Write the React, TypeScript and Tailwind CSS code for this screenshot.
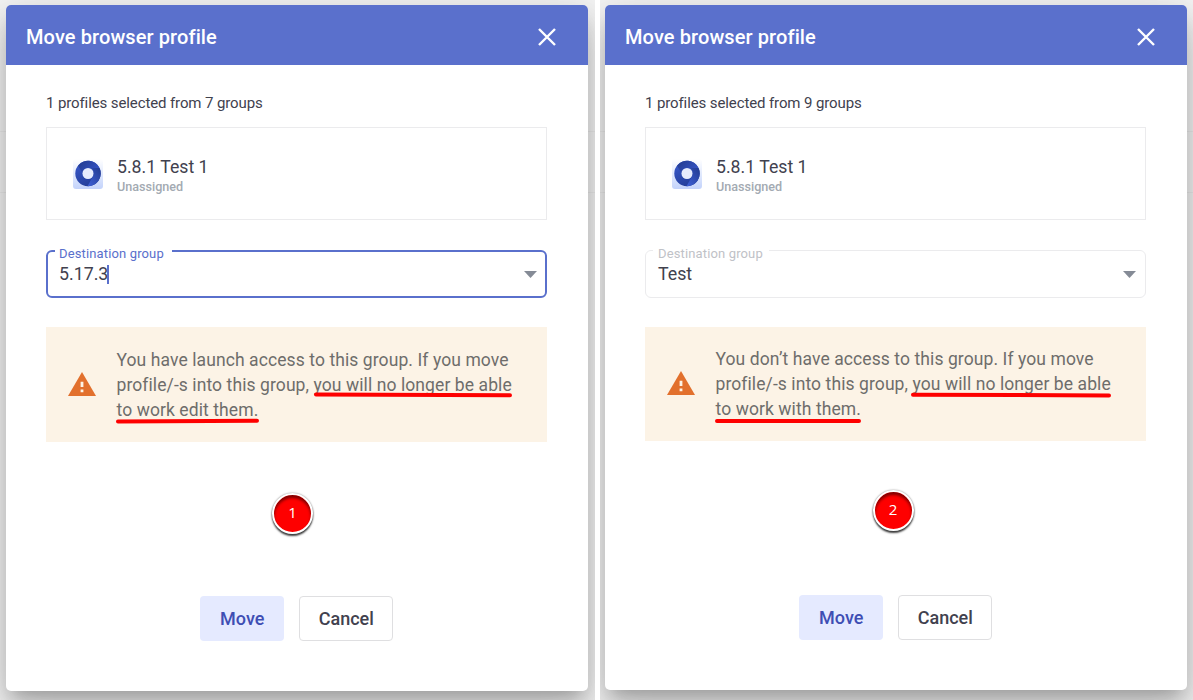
import { clsx } from "clsx";
import type { ReactNode } from "react";

type PaneProps = {
    groups: number;
    group: string;
    focused?: boolean;
    message: ReactNode;
    className: string;
    dialogClass: string;
    noticeClass: string;
    children: ReactNode;
};

function ProfileIcon() {
    return (
        <svg viewBox="0 0 30 30" className="h-[30px] w-[30px] shrink-0">
            <defs>
                <linearGradient id="tile" x1="0" y1="0" x2="0" y2="1">
                    <stop offset="0" stopColor="#ffffff" />
                    <stop offset="1" stopColor="#c3d3fb" />
                </linearGradient>
                <linearGradient id="left" x1="0" y1="0" x2="0.4" y2="1">
                    <stop offset="0" stopColor="#3a5bd0" />
                    <stop offset="1" stopColor="#243f9c" />
                </linearGradient>
                <linearGradient id="top" x1="0" y1="0" x2="1" y2="0.6">
                    <stop offset="0" stopColor="#213a8c" />
                    <stop offset="1" stopColor="#3553c4" />
                </linearGradient>
                <linearGradient id="bottom" x1="0" y1="1" x2="1" y2="0">
                    <stop offset="0" stopColor="#3e60d8" />
                    <stop offset="1" stopColor="#223b90" />
                </linearGradient>
            </defs>
            <rect width="30" height="30" rx="3" fill="url(#tile)" />
            <circle cx="15" cy="14.5" r="12.7" fill="url(#left)" />
            <path d="M5 6.7A12.7 12.7 0 0 1 26.5 9L18 9Q11 8 9.5 14Z" fill="url(#top)" />
            <path d="M14.5 27.2A12.7 12.7 0 0 0 26.5 9L19 9Q22.5 14 19 19Z" fill="url(#bottom)" />
            <circle cx="15" cy="14.5" r="5.5" fill="#e6ecfd" />
        </svg>
    );
}

function WarningIcon() {
    return (
        <svg viewBox="0 0 28 24" className="mb-[3px] h-6 w-7 shrink-0">
            <path d="M14 0L28 24H0Z" fill="#e2702d" />
            <path d="M12.6 9.8h2.8v5.2h-2.8zM12.6 17.6h2.8v2.6h-2.8z" fill="#fcf3e6" />
        </svg>
    );
}

function Marker({ n, className }: { n: number; className: string }) {
    return (
        <div
            className={clsx(
                "absolute flex h-[41px] w-[41px] justify-center rounded-full border-2 border-white bg-[#fe0000] pt-[8px] font-['Open_Sans',sans-serif] text-[15px] leading-[18px] font-medium text-white shadow-[0_2px_2px_rgba(0,0,0,0.75),0_0_2px_rgba(0,0,0,0.45),inset_0_3px_3px_rgba(0,0,0,0.5)]",
                className
            )}
        >
            {n}
        </div>
    );
}

function Pane({ groups, group, focused, message, className, dialogClass, noticeClass, children }: PaneProps) {
    return (
        <section className={clsx("relative h-full overflow-hidden bg-[#f6f6f6] pt-[5px]", className)}>
            {/* Table lines of the page behind the dialog */}
            <div className="absolute inset-x-0 top-[131px] h-[62px] border-y border-[#ececec]" />

            <div
                className={clsx(
                    "relative flex w-[582px] flex-col overflow-hidden rounded-[5px] bg-white",
                    "shadow-[0_11px_15px_-7px_rgba(0,0,0,0.2),0_24px_38px_3px_rgba(0,0,0,0.14),0_9px_46px_8px_rgba(0,0,0,0.12)]",
                    dialogClass
                )}
            >
                <header className="flex h-[60px] shrink-0 items-center justify-between bg-[#5a70cc] pr-8 pl-5 text-white">
                    <h2 className="pt-[3px] text-[20px] font-medium tracking-[0.1px]">Move browser profile</h2>
                    <svg viewBox="0 0 18 18" className="mt-[3px] h-[18px] w-[18px]" fill="none" stroke="currentColor" strokeWidth="2.4">
                        <path d="M1 1L17 17M17 1L1 17" />
                    </svg>
                </header>

                <div className="flex flex-1 flex-col pt-7 pr-[41px] pl-10">
                    <p className="text-[15px] leading-5 tracking-[-0.11px]">1 profiles selected from {groups} groups</p>

                    <div className="mt-3.5 flex h-[93px] items-center gap-3.5 border-[1.5px] border-[#ebebed] pl-[26px]">
                        <ProfileIcon />
                        <div className="pt-1">
                            <div className="text-[17.7px] leading-[22px]">5.8.1 Test 1</div>
                            <div className="text-[12.6px] leading-[18px] font-medium text-[#a3aab2]">Unassigned</div>
                        </div>
                    </div>

                    <div
                        className={clsx(
                            "relative mt-[30px] flex h-12 items-center justify-between rounded-md",
                            focused ? "border-[2.5px] border-[#5a70cc] pr-2 pl-[11px]" : "border-[1.5px] border-[#ebebed] pr-[9px] pl-3"
                        )}
                    >
                        <span
                            className={clsx(
                                "absolute bg-white text-[13px] leading-4 tracking-[0.14px]",
                                focused ? "-top-[6px] left-[7px] pr-2 pl-1 text-[#5a70cc]" : "-top-[5px] left-[7px] pr-1.5 pl-[5px] text-[#bfc2c7]"
                            )}
                        >
                            Destination group
                        </span>
                        <span className="flex items-center text-[17.8px] leading-[22px]">
                            {group}
                            {focused && <i className="-ml-px h-[19px] w-[1.5px] bg-[#5a70cc]" />}
                        </span>
                        <svg viewBox="0 0 13 7" className="h-[7px] w-[13px]">
                            <path d="M0 0H13L6.5 7Z" fill="#858b96" />
                        </svg>
                    </div>

                    <div className={clsx("mt-[29px] flex items-center gap-[21px] bg-[#fcf3e6] pt-px pl-[21.5px]", noticeClass)}>
                        <WarningIcon />
                        <p className="text-[17.5px] leading-[25px] tracking-[0.09px] whitespace-nowrap text-[#6e6d6b]">{message}</p>
                    </div>
                </div>

                <footer className="flex justify-center gap-[15px] pr-[0.5px] pb-[50px] text-[18px] font-medium">
                    <button className="h-[45px] w-[84px] rounded-[4px] bg-[#e5eaff] pb-px text-[#3e4eb4]">Move</button>
                    <button className="h-[45px] w-[94px] rounded-[4px] border border-[#dfdfe1] pb-px">Cancel</button>
                </footer>
            </div>
            {children}
        </section>
    );
}

export default function App() {
    return (
        <main className="flex h-[700px] w-[1193px] gap-[5px] bg-white font-['Roboto',sans-serif] text-[#41414e]">
            <Pane
                groups={7}
                group="5.17.3"
                focused
                className="w-[595px] pl-1.5"
                dialogClass="h-[686px]"
                noticeClass="h-[115px]"
                message={
                    <>
                        You have launch access to this group. If you move
                        <br />
                        profile/-s into this group, you will no longer be able
                        <br />
                        to work edit them.
                    </>
                }
            >
                <svg viewBox="0 0 400 32" className="absolute top-[392px] left-[114px] h-8 w-[400px]" stroke="#fe0000" strokeWidth="4" strokeLinecap="round">
                    <path d="M202 2.6L396 3.3M4 29.6L143 28.8" />
                </svg>
                <Marker n={1} className="top-[493px] left-[272px]" />
            </Pane>
            <Pane
                groups={9}
                group="Test"
                className="w-[593px] pl-[5px]"
                dialogClass="h-[685px]"
                noticeClass="h-[114px]"
                message={
                    <>
                        You don’t have access to this group. If you move
                        <br />
                        profile/-s into this group, you will no longer be able
                        <br />
                        to work with them.
                    </>
                }
            >
                <svg viewBox="0 0 400 32" className="absolute top-[392px] left-[113px] h-8 w-[400px]" stroke="#fe0000" strokeWidth="4" strokeLinecap="round">
                    <path d="M200 2.8L396 3.4M4 29H146" />
                </svg>
                <Marker n={2} className="top-[490px] left-[272.5px]" />
            </Pane>
        </main>
    );
}
